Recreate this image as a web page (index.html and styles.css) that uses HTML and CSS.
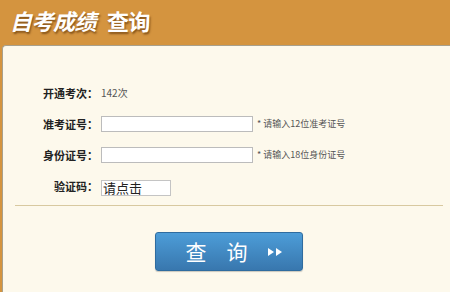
FILE: index.html
```html
<!DOCTYPE html>
<html lang="zh-CN">
<head>
  <meta charset="UTF-8" />
  <title>自考成绩查询</title>
  <link rel="stylesheet" href="styles.css">
</head>
<body>
  <div class="page">
    <header class="title-bar">
      <h1><em>自考成绩</em><span class="gap"></span>查询</h1>
    </header>
    <div class="panel">
      <form class="query-form">
        <div class="row">
          <label>开通考次：</label>
          <span class="value">142次</span>
        </div>
        <div class="row">
          <label>准考证号：</label>
          <input type="text" class="field">
          <span class="hint">* 请输入12位准考证号</span>
        </div>
        <div class="row">
          <label>身份证号：</label>
          <input type="text" class="field">
          <span class="hint">* 请输入18位身份证号</span>
        </div>
        <div class="row">
          <label>验证码：</label>
          <span class="captcha">请点击</span>
        </div>
      </form>
      <div class="divider"></div>
      <div class="actions">
        <button type="button" class="btn-query">
          <span class="btn-text">查</span><span class="btn-text">询</span>
          <svg class="arrows" width="15" height="10" viewBox="0 0 15 10">
            <path d="M0 1 L6 5 L0 9 Z M8 1 L14 5 L8 9 Z" fill="#fff"/>
          </svg>
        </button>
      </div>
    </div>
  </div>
</body>
</html>
```

FILE: styles.css
```css
body {
  margin: 0;
  background-color: #d4943f;
  font-family: "Noto Sans CJK SC", "Liberation Sans", sans-serif;
  color: #333;
  overflow: hidden;
}
.page {
  width: 450px;
  height: 292px;
}
.title-bar {
  height: 45px;
  box-sizing: border-box;
  padding: 6px 0 0 10px;
}
.title-bar h1 {
  margin: 0;
  font-size: 22px;
  line-height: 28px;
  font-weight: bold;
  color: #fff;
  text-shadow: 1px 2px 2px rgba(80, 40, 0, 0.6);
  letter-spacing: -0.5px;
}
.title-bar h1 em {
  font-style: italic;
}
.title-bar .gap {
  display: inline-block;
  width: 11px;
}
.panel {
  margin-left: 2px;
  height: 247px;
  background-color: #fdf9ec;
  border-top: 1px solid #a8a08c;
  border-left: 1px solid #a8a08c;
  border-top-left-radius: 4px;
  box-sizing: border-box;
}
.query-form {
  padding-top: 38px;
  display: flex;
  flex-direction: column;
  gap: 14px;
}
.row {
  display: flex;
  align-items: center;
  height: 17px;
}
.row label {
  width: 95px;
  text-align: right;
  font-size: 11px;
  font-weight: bold;
  color: #222;
}
.value {
  margin-left: 3px;
  font-size: 10px;
  color: #555;
}
.field {
  margin: 0 0 0 3px;
  width: 152px;
  height: 16px;
  box-sizing: border-box;
  border: 1px solid #bcbcbc;
  background: #fff;
  padding: 0;
}
.hint {
  margin-left: 4px;
  font-size: 9px;
  color: #555;
}
.captcha {
  margin-left: 3px;
  width: 70px;
  height: 16px;
  box-sizing: border-box;
  border: 1px solid #c4c4c4;
  background: #fff;
  font-size: 13px;
  line-height: 14px;
  color: #222;
  padding-left: 1px;
  margin-top: 4px;
}
.divider {
  margin: 11px 7px 0 12px;
  border-top: 1px solid #d8c9a0;
}
.actions {
  padding: 26px 0 0 152px;
}
.btn-query {
  width: 148px;
  height: 39px;
  border: 1px solid #2f6c9f;
  border-radius: 3px;
  background: linear-gradient(#4d9dd8, #3877ae);
  color: #fff;
  font-family: "Noto Sans CJK SC", sans-serif;
  font-size: 21px;
  padding: 0 0 0 10px;
  box-shadow: 0 1px 1px rgba(0, 0, 0, 0.2);
  display: flex;
  align-items: center;
  justify-content: center;
  gap: 20px;
}
.btn-text {
  line-height: 37px;
}
.arrows {
  display: block;
}
```
